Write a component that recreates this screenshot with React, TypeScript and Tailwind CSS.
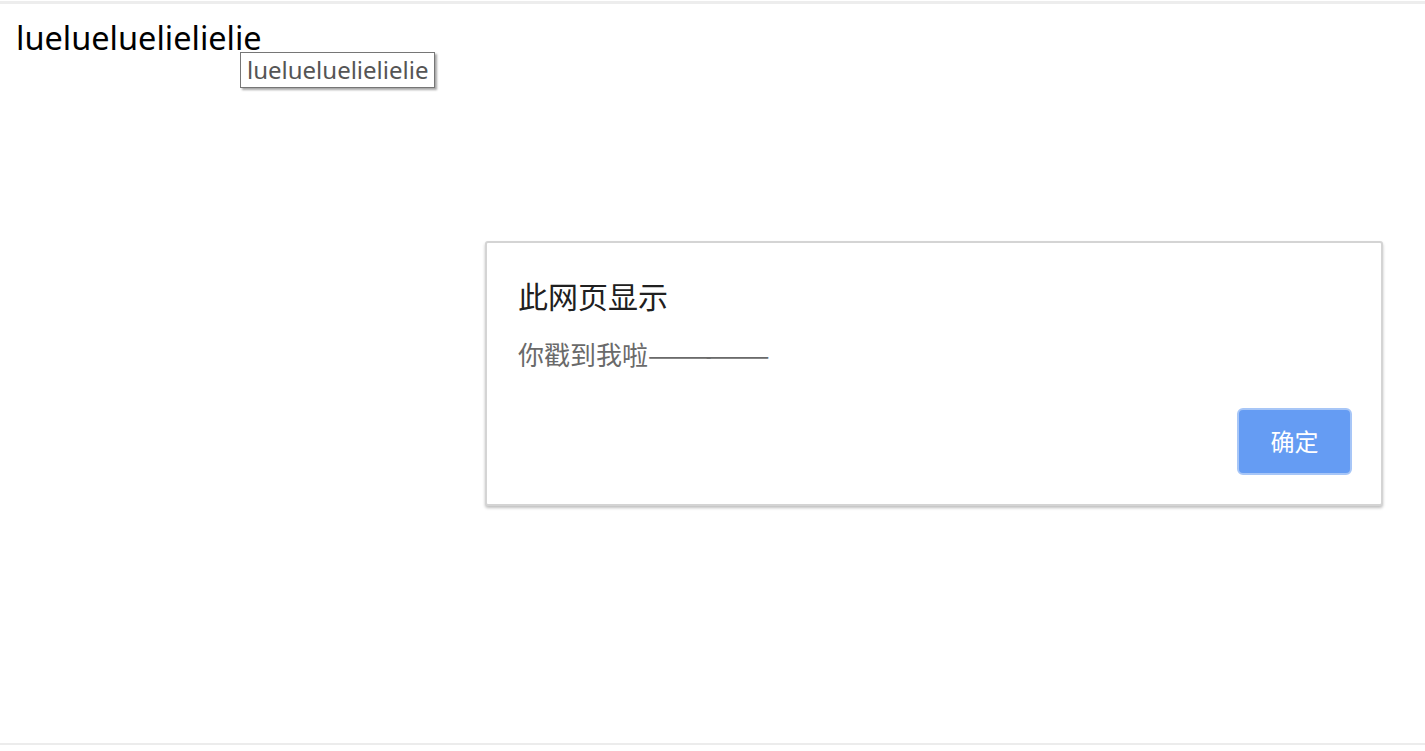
import React from "react";

export default function App() {
  const font = { fontFamily: '"Noto Sans", "Noto Sans CJK SC", sans-serif' };
  return (
    <div className="relative w-full h-[751px] bg-white overflow-hidden" style={font}>
      <div className="h-[3px] mt-[1px] bg-[#ededed]" />
      <div className="pl-[16px] pt-[14px] text-[32.5px] leading-[40px] text-black">luelueluelielielie</div>

      <div className="absolute left-[240px] top-[52px] h-[36px] px-[6px] border border-[#767676] bg-white text-[24px] leading-[33px] text-[#555] shadow-[2px_2px_2px_rgba(0,0,0,0.35)]">
        luelueluelielielie
      </div>

      <div className="absolute left-[485px] top-[241px] w-[898px] h-[265px] rounded-[3px] border-2 border-[#d4d4d4] bg-white shadow-[0_2px_3px_rgba(0,0,0,0.25)] flex flex-col px-[31px] pt-[34px]">
        <div className="text-[30px] leading-[40px] text-[#202020]">此网页显示</div>
        <div className="mt-[20px] text-[26px] leading-[34px] text-[#6a6a6a]">
          你戳到我啦
          <span className="tracking-[-6.5px]" style={{ fontFamily: '"Noto Sans CJK SC", sans-serif' }}>
            ——————
          </span>
        </div>
        <div className="flex justify-end mt-[36px] -mr-[2px]">
          <button className="w-[115px] h-[67px] rounded-[6px] bg-[#659cf3] border-2 border-[#a7c6f7] text-white text-[24px]">确定</button>
        </div>
      </div>

      <div className="absolute left-0 right-0 top-[743px] h-[2px] bg-[#ececec]" />
    </div>
  );
}
